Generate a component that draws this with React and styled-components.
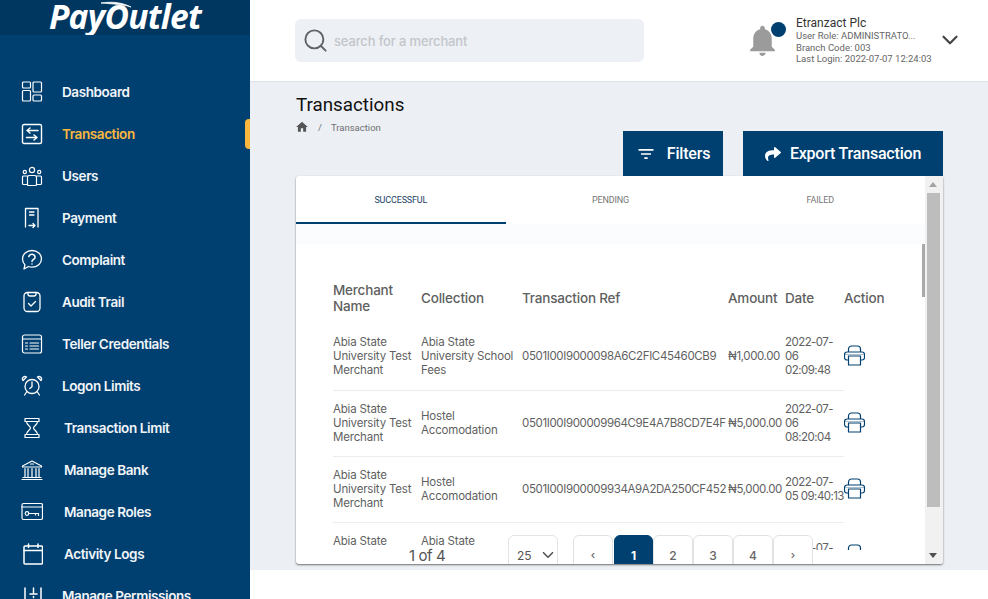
import React from "react";
import styled, { createGlobalStyle } from "styled-components";
import { Search, ChevronDown } from "lucide-react";
import { MdHome, MdNotifications, MdFilterList } from "react-icons/md";
import { FaShare } from "react-icons/fa";

const GlobalStyle = createGlobalStyle`
  html, body { margin: 0; padding: 0; background: #fff; }
  body { font-family: "Inter", "Liberation Sans", sans-serif; overflow: hidden; }
  * { box-sizing: border-box; }
`;

const navy = "#004071";

const Line = ({ children }) => (
  <svg width="22" height="22" viewBox="0 0 22 22" fill="none" stroke="#fff" strokeWidth="1.2" strokeLinecap="round" strokeLinejoin="round">
    {children}
  </svg>
);

const icons = {
  dashboard: (
    <Line>
      <rect x="1.5" y="1" width="8" height="6" rx="1" />
      <rect x="12" y="1" width="8.5" height="10" rx="1" />
      <rect x="1.5" y="9.5" width="8" height="10.5" rx="1" />
      <rect x="12" y="14" width="8.5" height="6" rx="1" />
    </Line>
  ),
  transaction: (
    <Line>
      <rect x="1.5" y="1.5" width="19" height="19" rx="1.5" strokeWidth="1.4" />
      <path d="M17 7.5H6.5M9 5L6 7.5 9 10M5.5 14.5H16M13 12l3 2.5L13 17" strokeWidth="1.5" />
    </Line>
  ),
  users: (
    <Line>
      <circle cx="11" cy="5" r="2.6" />
      <circle cx="3.8" cy="7" r="1.6" />
      <circle cx="18.2" cy="7" r="1.6" />
      <path d="M6.5 19.5v-7a2 2 0 0 1 2-2h5a2 2 0 0 1 2 2v7a1 1 0 0 1-1 1h-7.500a1 1 0 0 1-.5-1z" />
      <path d="M6.500 11H2.500a1 1 0 0 0-1 1v6.500a1 1 0 0 0 1 1h4M15.500 11h4a1 1 0 0 1 1 1v6.500a1 1 0 0 1-1 1h-4" />
    </Line>
  ),
  payment: (
    <Line>
      <path d="M4.500 20V1.500h12.500V20" strokeWidth="1.3" />
      <path d="M8.500 5h4.500M8.500 8h4.500M8 18.500h6M12 16.500l2 2-2 2" strokeWidth="1.3" />
    </Line>
  ),
  complaint: (
    <Line>
      <path d="M11 1.500c5.500 0 9.500 3.700 9.500 8.300s-4 8.300-9.500 8.300c-1.300 0-2.500-.2-3.600-.6L3 20l.9-4.200C2.300 14.300 1.500 12.200 1.500 9.800 1.500 5.200 5.500 1.500 11 1.500z" strokeWidth="1.3" />
      <path d="M7.800 7.600a3.200 3.200 0 0 1 6.300.6c0 2.100-3.100 2.400-3.100 4.400M11 14.900v.2" strokeWidth="1.5" />
    </Line>
  ),
  audit: (
    <Line>
      <rect x="3" y="1.500" width="16" height="19" rx="3.500" strokeWidth="1.3" />
      <path d="M7 1.500v1.500a2 2 0 0 0 2 2h4a2 2 0 0 0 2-2V1.500M7.500 12.500l2.500 2.500 4.500-4.500" strokeWidth="1.3" />
    </Line>
  ),
  teller: (
    <Line>
      <rect x="1.500" y="2" width="19" height="18" rx="2" />
      <path d="M1.500 6h19M4.500 10h2M9 10h8.500M4.500 13h2M9 13h8.500M4.500 16h2M9 16h8.500" />
    </Line>
  ),
  logon: (
    <Line>
      <circle cx="11" cy="11.500" r="7" strokeWidth="1.3" />
      <path d="M11 7v4.800l-2.200 1.800M5.600 17l-2 3M16.400 17l2 3" strokeWidth="1.3" />
      <path d="M2 5.500a2.500 2.500 0 0 1 3.500-3.500zM20 5.500A2.500 2.500 0 0 0 16.500 2z" strokeWidth="1.3" />
    </Line>
  ),
  limit: (
    <Line>
      <path d="M4 1.500h14v3H4zM4 17.500h14v3H4z" strokeWidth="1.2" />
      <path d="M5.500 4.500c0 3.500 4 4.500 4 6.500s-4 3-4 6.500M16.500 4.500c0 3.500-4 4.500-4 6.500s4 3 4 6.500" strokeWidth="1.2" />
    </Line>
  ),
  bank: (
    <Line>
      <path d="M1.500 7L11 2l9.500 5v1h-19zM1 20.500h20M2 18.500h18" />
      <path d="M4 9.500v9M7 9.500v9M11 9.500v9M15 9.500v9M18 9.500v9M9.500 5h3" />
    </Line>
  ),
  roles: (
    <Line>
      <rect x="1" y="2.500" width="20.500" height="16" rx="1.500" />
      <path d="M1 6h20.500" />
      <circle cx="6" cy="12.500" r="1.800" />
      <path d="M8 12.500h9.500v2M14.500 12.500v1.500" />
    </Line>
  ),
  logs: (
    <Line>
      <rect x="3" y="3" width="18.500" height="18" rx="1" strokeWidth="1.500" />
      <path d="M3 7.500h18.500M7.500 1v3.500M17 1v3.500" strokeWidth="1.500" />
    </Line>
  ),
  perms: (
    <Line>
      <path d="M4 3v18M12.500 3v5M9 9h7M12.500 11.500v1M20 3v18" strokeWidth="1.500" />
    </Line>
  ),
};

const navItems = [
  { label: "Dashboard", icon: "dashboard" },
  { label: "Transaction", icon: "transaction", active: true },
  { label: "Users", icon: "users" },
  { label: "Payment", icon: "payment" },
  { label: "Complaint", icon: "complaint" },
  { label: "Audit Trail", icon: "audit" },
  { label: "Teller Credentials", icon: "teller" },
  { label: "Logon Limits", icon: "logon" },
  { label: "Transaction Limit", icon: "limit", shifted: true },
  { label: "Manage Bank", icon: "bank", shifted: true },
  { label: "Manage Roles", icon: "roles", shifted: true },
  { label: "Activity Logs", icon: "logs", shifted: true },
  { label: "Manage Permissions", icon: "perms" },
];

const rows = [
  {
    merchant: "Abia State\nUniversity Test\nMerchant",
    collection: "Abia State\nUniversity School\nFees",
    ref: "0501I00I9000098A6C2FIC45460CB9",
    amount: "₦1,000.00",
    date: "2022-07-\n06\n02:09:48",
  },
  {
    merchant: "Abia State\nUniversity Test\nMerchant",
    collection: "Hostel\nAccomodation",
    ref: "0501I00I900009964C9E4A7B8CD7E4F",
    amount: "₦5,000.00",
    date: "2022-07-\n06\n08:20:04",
  },
  {
    merchant: "Abia State\nUniversity Test\nMerchant",
    collection: "Hostel\nAccomodation",
    ref: "0501I00I900009934A9A2DA250CF452",
    amount: "₦5,000.00",
    date: "2022-07-\n05 09:40:13",
  },
  {
    merchant: "Abia State\nUniversity Test\nMerchant",
    collection: "Abia State\nUniversity School\nFees",
    ref: "0501I00I900009912B7C3DE1A0F4471",
    amount: "₦1,000.00",
    date: "2022-07-\n05 08:11:27",
  },
];

const columns = [
  { title: "Merchant\nName", width: 88 },
  { title: "Collection", width: 101 },
  { title: "Transaction Ref", width: 206 },
  { title: "Amount", width: 57 },
  { title: "Date", width: 59 },
  { title: "Action", width: 41 },
];

const Page = styled.div`
  display: flex;
  width: 988px;
  height: 599px;
  overflow: hidden;
`;

const Sidebar = styled.aside`
  flex: 0 0 250px;
  height: 599px;
  overflow: hidden;
  background: ${navy};
`;

const LogoBand = styled.div`
  height: 35px;
  background: #003761;
  display: flex;
  justify-content: center;
  overflow: hidden;
`;

const LogoMark = styled.div`
  position: relative;
  font-family: "Open Sans", sans-serif;
  font-style: italic;
  font-weight: 700;
  font-size: 33.5px;
  line-height: 32px;
  letter-spacing: -0.7px;
  color: #fff;
`;

const Swoosh = styled.svg`
  position: absolute;
  left: 51px;
  top: 1px;
`;

const NavList = styled.nav`
  margin-top: 36px;
`;

const NavRow = styled.div`
  position: relative;
  display: flex;
  align-items: center;
  height: 42px;
  padding-left: 21px;
  color: ${(p) => (p.$active ? "#fbb83d" : "#f2f5f8")};
  font-size: 13.5px;
  font-weight: 600;
  letter-spacing: -0.4px;
`;

const NavIcon = styled.span`
  display: flex;
  justify-content: center;
  width: 22px;
`;

const NavLabel = styled.span`
  margin-left: ${(p) => (p.$shifted ? "21px" : "19px")};
`;

const ActiveMark = styled.span`
  position: absolute;
  right: 0;
  top: 6px;
  width: 5px;
  height: 30px;
  border-radius: 4px 0 0 4px;
  background: #fbb83d;
`;

const Main = styled.main`
  flex: 1;
  min-width: 0;
`;

const Header = styled.header`
  display: flex;
  align-items: center;
  justify-content: space-between;
  height: 82px;
  padding: 0 25px 0 45px;
  background: #fff;
  border-bottom: 1px solid #dfe2e6;
`;

const SearchBox = styled.div`
  display: flex;
  align-items: center;
  gap: 5px;
  width: 349px;
  height: 43px;
  padding-left: 7px;
  border-radius: 6px;
  background: #edf0f5;
  color: #5f6368;
`;

const SearchText = styled.span`
  font-size: 13px;
  font-weight: 500;
  letter-spacing: -0.15px;
  color: #c3c6ca;
`;

const UserArea = styled.div`
  display: flex;
  align-items: center;
`;

const BellWrap = styled.div`
  position: relative;
  display: flex;
  width: 37px;
  margin-right: 15px;
  color: #9b9b9b;
`;

const BellDot = styled.span`
  position: absolute;
  right: -5px;
  top: 0;
  width: 15px;
  height: 15px;
  border-radius: 50%;
  background: ${navy};
`;

const UserInfo = styled.div`
  width: 141px;
  font-family: "Roboto", sans-serif;
  font-size: 9.500px;
  line-height: 11.500px;
  color: #666;
`;

const UserName = styled.div`
  font-size: 12px;
  line-height: 14px;
  color: #333;
`;

const UserChevron = styled(ChevronDown)`
  margin-top: -2px;
`;

const Content = styled.section`
  height: 488px;
  padding: 0 45px;
  background: #ecf0f5;
`;

const PageHead = styled.div`
  height: 49px;
  padding-top: 12px;
`;

const Title = styled.h1`
  margin: 0 0 0 1px;
  font-family: "Roboto", sans-serif;
  font-size: 18.800px;
  line-height: 22px;
  font-weight: 400;
  color: #111;
`;

const Crumbs = styled.div`
  display: flex;
  align-items: center;
  gap: 9px;
  height: 14px;
  margin-top: 4px;
  font-family: "Roboto", sans-serif;
  font-size: 9.500px;
  color: #6f6f6f;
`;

const Actions = styled.div`
  display: flex;
  justify-content: flex-end;
  gap: 20px;
`;

const ActionButton = styled.button`
  display: flex;
  align-items: center;
  justify-content: center;
  gap: ${(p) => (p.$wide ? "9px" : "11px")};
  width: ${(p) => (p.$wide ? "200px" : "100px")};
  height: 45px;
  border: 0;
  background: ${navy};
  color: #fff;
  font-family: "Roboto", sans-serif;
  font-size: 16px;
  font-weight: 500;
  letter-spacing: -0.2px;
`;

const Card = styled.div`
  position: relative;
  display: flex;
  width: 647px;
  height: 388px;
  margin-left: 1px;
  overflow: hidden;
  border-radius: 3px;
  background: #fff;
  box-shadow: 0 1px 2px rgba(0, 0, 0, 0.55);
`;

const CardBody = styled.div`
  flex: 1;
  min-width: 0;
`;

const Tabs = styled.div`
  display: grid;
  grid-template-columns: repeat(3, 1fr);
`;

const Tab = styled.div`
  display: flex;
  align-items: center;
  justify-content: center;
  height: 48px;
  padding-top: 1px;
  border-bottom: 2px solid ${(p) => (p.$active ? navy : "transparent")};
  font-family: "Roboto", sans-serif;
  font-size: 9px;
  letter-spacing: -0.15px;
  color: ${(p) => (p.$active ? "#1c3f63" : "#767676")};
`;

const Band = styled.div`
  height: 20px;
  background: #fbfcfe;
`;

const TableArea = styled.div`
  height: 306px;
  padding: 27px 0 0 37px;
  overflow: hidden;
`;

const Table = styled.table`
  width: 552px;
  table-layout: fixed;
  border-collapse: collapse;
  color: #5f5f5f;

  tbody tr:first-child td {
    padding-bottom: 1px;
  }
`;

const HeadCell = styled.th`
  height: 53px;
  padding: 0;
  font-size: 13.500px;
  line-height: 16px;
  font-weight: 500;
  letter-spacing: -0.2px;
  text-align: left;
  white-space: pre;
`;

const Cell = styled.td`
  height: 66px;
  padding: 0;
  border-bottom: ${(p) => (p.$plain ? "0" : "1px solid #ececec")};
  font-size: 11.500px;
  line-height: 14px;
  letter-spacing: ${(p) => p.$spacing || "-0.18px"};
  white-space: pre;
  vertical-align: middle;
`;

const PrintIcon = styled.svg`
  display: block;
  transform: translateY(-1px);
`;

const InnerThumb = styled.span`
  position: absolute;
  left: 626px;
  top: 68px;
  width: 3px;
  height: 53px;
  background: #a9a9a9;
`;

const Scrollbar = styled.div`
  display: flex;
  flex-direction: column;
  align-items: center;
  flex: 0 0 18px;
  padding-right: 2px;
  background: #f1f1f1;
`;

const Arrow = styled.span`
  flex: 0 0 5px;
  width: 0;
  height: 0;
  margin: 6px 0;
  border-left: 4px solid transparent;
  border-right: 4px solid transparent;
  ${(p) => (p.$down ? "border-top: 5px solid #505050;" : "border-bottom: 5px solid #a3a3a3;")}
`;

const ScrollThumb = styled.span`
  width: 13px;
  height: 314px;
  background: #bdbdbd;
`;

const ScrollGap = styled.span`
  flex: 1;
`;

const Pager = styled.div`
  position: absolute;
  left: 113px;
  bottom: -11px;
  display: flex;
  align-items: center;
  height: 40px;
`;

const PageCount = styled.span`
  width: 99px;
  font-size: 15px;
  letter-spacing: -0.4px;
  color: #555;
`;

const PageSize = styled.div`
  display: flex;
  align-items: center;
  justify-content: space-between;
  width: 50px;
  height: 40px;
  margin-right: 15px;
  padding: 0 0 0 8px;
  border: 1px solid #e4e4e4;
  border-radius: 6px;
  background: #fff;
  font-size: 12px;
  color: #555;
`;

const PageButton = styled.span`
  display: flex;
  align-items: center;
  justify-content: center;
  width: ${(p) => (p.$active ? "39px" : "40px")};
  height: 40px;
  margin-left: ${(p) => (p.$active ? "1px" : "0")};
  border: 1px solid ${(p) => (p.$active ? navy : "#e2e2e2")};
  border-radius: 6px;
  background: ${(p) => (p.$active ? navy : "#fff")};
  color: ${(p) => (p.$active ? "#fff" : "#666")};
  font-size: ${(p) => (p.$arrow ? "11px" : "12px")};
  font-weight: ${(p) => (p.$active ? 700 : 500)};
`;

const Printer = () => (
  <PrintIcon width="21" height="21" viewBox="0 0 21 21" fill="none" stroke={navy} strokeWidth="1.200" strokeLinejoin="round">
    <path d="M4.500 7V4a3 3 0 0 1 3-3h6a3 3 0 0 1 3 3v3" />
    <path d="M4.500 15H3a2.500 2.500 0 0 1-2.500-2.500v-3A2.500 2.500 0 0 1 3 7h15a2.500 2.500 0 0 1 2.500 2.500v3A2.500 2.500 0 0 1 18 15h-1.500" />
    <rect x="4.500" y="11" width="12" height="9" />
    <path d="M1 9.500h19" stroke="#6d94b3" strokeWidth="0.600" />
  </PrintIcon>
);

export default function App() {
  return (
    <>
      <GlobalStyle />
      <Page>
        <Sidebar>
          <LogoBand>
            <LogoMark>
              PayOutlet
              <Swoosh width="34" height="12" viewBox="0 0 34 12" fill="none">
                <path d="M1 2c10-1.500 20-1 30 4C24 3.500 14 3 1 2z" fill="#fff" stroke="#fff" strokeWidth="0.800" />
              </Swoosh>
            </LogoMark>
          </LogoBand>
          <NavList>
            {navItems.map((item) => (
              <NavRow key={item.label} $active={item.active}>
                <NavIcon>{icons[item.icon]}</NavIcon>
                <NavLabel $shifted={item.shifted}>{item.label}</NavLabel>
                {item.active && <ActiveMark />}
              </NavRow>
            ))}
          </NavList>
        </Sidebar>
        <Main>
          <Header>
            <SearchBox>
              <Search size={27} strokeWidth={1.7} />
              <SearchText>search for a merchant</SearchText>
            </SearchBox>
            <UserArea>
              <BellWrap>
                <MdNotifications size={37} />
                <BellDot />
              </BellWrap>
              <UserInfo>
                <UserName>Etranzact Plc</UserName>
                <div>User Role: ADMINISTRATO...</div>
                <div>Branch Code: 003</div>
                <div>Last Login: 2022-07-07 12:24:03</div>
              </UserInfo>
              <UserChevron size={26} color="#444" strokeWidth={2} />
            </UserArea>
          </Header>
          <Content>
            <PageHead>
              <Title>Transactions</Title>
              <Crumbs>
                <MdHome size={14} color="#555" />
                <span>/</span>
                <span>Transaction</span>
              </Crumbs>
            </PageHead>
            <Actions>
              <ActionButton>
                <MdFilterList size={20} />
                Filters
              </ActionButton>
              <ActionButton $wide>
                <FaShare size={16} />
                Export Transaction
              </ActionButton>
            </Actions>
            <Card>
              <CardBody>
                <Tabs>
                  <Tab $active>SUCCESSFUL</Tab>
                  <Tab>PENDING</Tab>
                  <Tab>FAILED</Tab>
                </Tabs>
                <Band />
                <TableArea>
                  <Table>
                    <colgroup>
                      {columns.map((col) => (
                        <col key={col.title} width={col.width} />
                      ))}
                    </colgroup>
                    <thead>
                      <tr>
                        {columns.map((col) => (
                          <HeadCell key={col.title}>{col.title}</HeadCell>
                        ))}
                      </tr>
                    </thead>
                    <tbody>
                      {rows.map((row) => (
                        <tr key={row.ref}>
                          <Cell>{row.merchant}</Cell>
                          <Cell>{row.collection}</Cell>
                          <Cell $spacing="-0.37px">{row.ref}</Cell>
                          <Cell $spacing="-0.4px">{row.amount}</Cell>
                          <Cell $spacing="-0.55px">{row.date}</Cell>
                          <Cell $plain>
                            <Printer />
                          </Cell>
                        </tr>
                      ))}
                    </tbody>
                  </Table>
                </TableArea>
              </CardBody>
              <Scrollbar>
                <Arrow />
                <ScrollThumb />
                <ScrollGap />
                <Arrow $down />
              </Scrollbar>
              <InnerThumb />
              <Pager>
                <PageCount>1 of 4</PageCount>
                <PageSize>
                  25
                  <ChevronDown size={18} strokeWidth={2.2} />
                </PageSize>
                <PageButton $arrow>‹</PageButton>
                <PageButton $active>1</PageButton>
                <PageButton>2</PageButton>
                <PageButton>3</PageButton>
                <PageButton>4</PageButton>
                <PageButton $arrow>›</PageButton>
              </Pager>
            </Card>
          </Content>
        </Main>
      </Page>
    </>
  );
}
